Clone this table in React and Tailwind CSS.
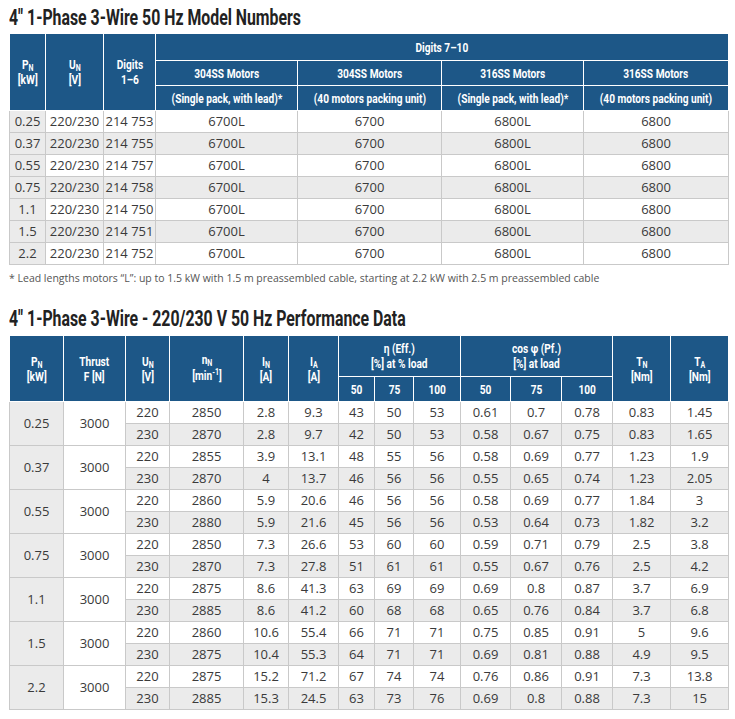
import React from "react";

const HEAD = "bg-[#1d5787] text-white font-bold text-[13px] leading-[15px] border border-white text-center align-middle p-0 font-['Roboto',sans-serif]";
const CELL = "border border-[#c9c9c9] text-center align-middle text-[13px] text-[#3a3a3a] p-0";
const TITLE = "inline-block whitespace-nowrap origin-left scale-x-[0.72] text-[22px] leading-[26px] font-bold text-[#222] font-['Roboto',sans-serif]";

const models = [
  ["0.25", "214 753"],
  ["0.37", "214 755"],
  ["0.55", "214 757"],
  ["0.75", "214 758"],
  ["1.1", "214 750"],
  ["1.5", "214 751"],
  ["2.2", "214 752"],
];

const perf = [
  ["0.25", [
    ["220", "2850", "2.8", "9.3", "43", "50", "53", "0.61", "0.7", "0.78", "0.83", "1.45"],
    ["230", "2870", "2.8", "9.7", "42", "50", "53", "0.58", "0.67", "0.75", "0.83", "1.65"],
  ]],
  ["0.37", [
    ["220", "2855", "3.9", "13.1", "48", "55", "56", "0.58", "0.69", "0.77", "1.23", "1.9"],
    ["230", "2870", "4", "13.7", "46", "56", "56", "0.55", "0.65", "0.74", "1.23", "2.05"],
  ]],
  ["0.55", [
    ["220", "2860", "5.9", "20.6", "46", "56", "56", "0.58", "0.69", "0.77", "1.84", "3"],
    ["230", "2880", "5.9", "21.6", "45", "56", "56", "0.53", "0.64", "0.73", "1.82", "3.2"],
  ]],
  ["0.75", [
    ["220", "2850", "7.3", "26.6", "53", "60", "60", "0.59", "0.71", "0.79", "2.5", "3.8"],
    ["230", "2870", "7.3", "27.8", "51", "61", "61", "0.55", "0.67", "0.76", "2.5", "4.2"],
  ]],
  ["1.1", [
    ["220", "2875", "8.6", "41.3", "63", "69", "69", "0.69", "0.8", "0.87", "3.7", "6.9"],
    ["230", "2885", "8.6", "41.2", "60", "68", "68", "0.65", "0.76", "0.84", "3.7", "6.8"],
  ]],
  ["1.5", [
    ["220", "2860", "10.6", "55.4", "66", "71", "71", "0.75", "0.85", "0.91", "5", "9.6"],
    ["230", "2875", "10.4", "55.3", "64", "71", "71", "0.69", "0.81", "0.88", "4.9", "9.5"],
  ]],
  ["2.2", [
    ["220", "2875", "15.2", "71.2", "67", "74", "74", "0.76", "0.86", "0.91", "7.3", "13.8"],
    ["230", "2885", "15.3", "24.5", "63", "73", "76", "0.69", "0.8", "0.88", "7.3", "15"],
  ]],
];

// header text is a condensed face in the source; squeeze Roboto to match
function C({ children }) {
  return <span className="inline-block whitespace-nowrap scale-x-[0.78]">{children}</span>;
}

function Sym({ base, sub }) {
  return (
    <>
      {base}
      <sub className="text-[9px] align-baseline relative top-[2px]">{sub}</sub>
    </>
  );
}

function ModelTable() {
  return (
    <table className="table-fixed border-collapse w-[719px]">
      <colgroup>
        {[36, 58, 52, 142, 144, 142, 145].map((w, i) => (
          <col key={i} style={{ width: w }} />
        ))}
      </colgroup>
      <thead>
        <tr className="h-[27px]">
          <th rowSpan={3} className={HEAD}>
            <C>
              <Sym base="P" sub="N" />
              <br />
              [kW]
            </C>
          </th>
          <th rowSpan={3} className={HEAD}>
            <C>
              <Sym base="U" sub="N" />
              <br />
              [V]
            </C>
          </th>
          <th rowSpan={3} className={HEAD}>
            <C>
              Digits
              <br />
              1–6
            </C>
          </th>
          <th colSpan={4} className={HEAD}>
            <C>Digits 7–10</C>
          </th>
        </tr>
        <tr className="h-[25px]">
          <th className={HEAD}><C>304SS Motors</C></th>
          <th className={HEAD}><C>304SS Motors</C></th>
          <th className={HEAD}><C>316SS Motors</C></th>
          <th className={HEAD}><C>316SS Motors</C></th>
        </tr>
        <tr className="h-[25px]">
          <th className={HEAD}><C>(Single pack, with lead)*</C></th>
          <th className={HEAD}><C>(40 motors packing unit)</C></th>
          <th className={HEAD}><C>(Single pack, with lead)*</C></th>
          <th className={HEAD}><C>(40 motors packing unit)</C></th>
        </tr>
      </thead>
      <tbody>
        {models.map(([kw, digits], i) => {
          const bg = i % 2 === 1 ? "bg-[#ebebeb]" : "bg-white";
          return (
            <tr key={kw} className="h-[22px]">
              <td className={`${CELL} bg-[#ebebeb]`}>{kw}</td>
              <td className={`${CELL} ${bg}`}>220/230</td>
              <td className={`${CELL} ${bg}`}>{digits}</td>
              <td className={`${CELL} ${bg}`}>6700L</td>
              <td className={`${CELL} ${bg}`}>6700</td>
              <td className={`${CELL} ${bg}`}>6800L</td>
              <td className={`${CELL} ${bg}`}>6800</td>
            </tr>
          );
        })}
      </tbody>
    </table>
  );
}

function PerfTable() {
  return (
    <table className="table-fixed border-collapse w-[719px]">
      <colgroup>
        {[54, 62, 44, 74, 45, 50, 36, 39, 47, 50, 51, 51, 58, 58].map((w, i) => (
          <col key={i} style={{ width: w }} />
        ))}
      </colgroup>
      <thead>
        <tr className="h-[41px]">
          <th rowSpan={2} className={HEAD}>
            <C>
              <Sym base="P" sub="N" />
              <br />
              [kW]
            </C>
          </th>
          <th rowSpan={2} className={HEAD}>
            <C>
              Thrust
              <br />F [N]
            </C>
          </th>
          <th rowSpan={2} className={HEAD}>
            <C>
              <Sym base="U" sub="N" />
              <br />
              [V]
            </C>
          </th>
          <th rowSpan={2} className={HEAD}>
            <C>
              <Sym base="n" sub="N" />
              <br />
              <span className="leading-[18px]">
                [min<sup className="text-[9px] align-baseline relative -top-[5px]">-1</sup>]
              </span>
            </C>
          </th>
          <th rowSpan={2} className={HEAD}>
            <C>
              <Sym base="I" sub="N" />
              <br />
              [A]
            </C>
          </th>
          <th rowSpan={2} className={HEAD}>
            <C>
              <Sym base="I" sub="A" />
              <br />
              [A]
            </C>
          </th>
          <th colSpan={3} className={HEAD}>
            <C>
              η (Eff.)
              <br />
              [%] at % load
            </C>
          </th>
          <th colSpan={3} className={HEAD}>
            <C>
              cos φ (Pf.)
              <br />
              [%] at load
            </C>
          </th>
          <th rowSpan={2} className={HEAD}>
            <C>
              <Sym base="T" sub="N" />
              <br />
              [Nm]
            </C>
          </th>
          <th rowSpan={2} className={HEAD}>
            <C>
              <Sym base="T" sub="A" />
              <br />
              [Nm]
            </C>
          </th>
        </tr>
        <tr className="h-[25px]">
          {["50", "75", "100", "50", "75", "100"].map((v, i) => (
            <th key={i} className={HEAD}>
              <C>{v}</C>
            </th>
          ))}
        </tr>
      </thead>
      <tbody>
        {perf.map(([kw, rows]) =>
          rows.map((r, j) => {
            const bg = j === 1 ? "bg-[#ebebeb]" : "bg-white";
            return (
              <tr key={kw + j} className="h-[22px]">
                {j === 0 && (
                  <>
                    <td rowSpan={2} className={`${CELL} bg-[#ebebeb]`}>{kw}</td>
                    <td rowSpan={2} className={`${CELL} bg-white`}>3000</td>
                  </>
                )}
                {r.map((v, k) => (
                  <td key={k} className={`${CELL} ${bg}`}>{v}</td>
                ))}
              </tr>
            );
          })
        )}
      </tbody>
    </table>
  );
}

export default function App() {
  return (
    <div className="w-[735px] h-[719px] bg-white px-[9px] font-['Open_Sans',sans-serif]">
      <div className="pt-[5px] mb-[3px] h-[30px]">
        <h2 className={TITLE}>4″ 1-Phase 3-Wire 50 Hz Model Numbers</h2>
      </div>
      <ModelTable />
      <p className="mt-[5px] text-[10.5px] leading-[16px] text-[#555]">
        * Lead lengths motors “L”: up to 1.5 kW with 1.5 m preassembled cable, starting at 2.2 kW with 2.5 m preassembled cable
      </p>
      <div className="mt-[20px] mb-[3px] h-[26px]">
        <h2 className={TITLE}>4″ 1-Phase 3-Wire - 220/230 V 50 Hz Performance Data</h2>
      </div>
      <PerfTable />
    </div>
  );
}
